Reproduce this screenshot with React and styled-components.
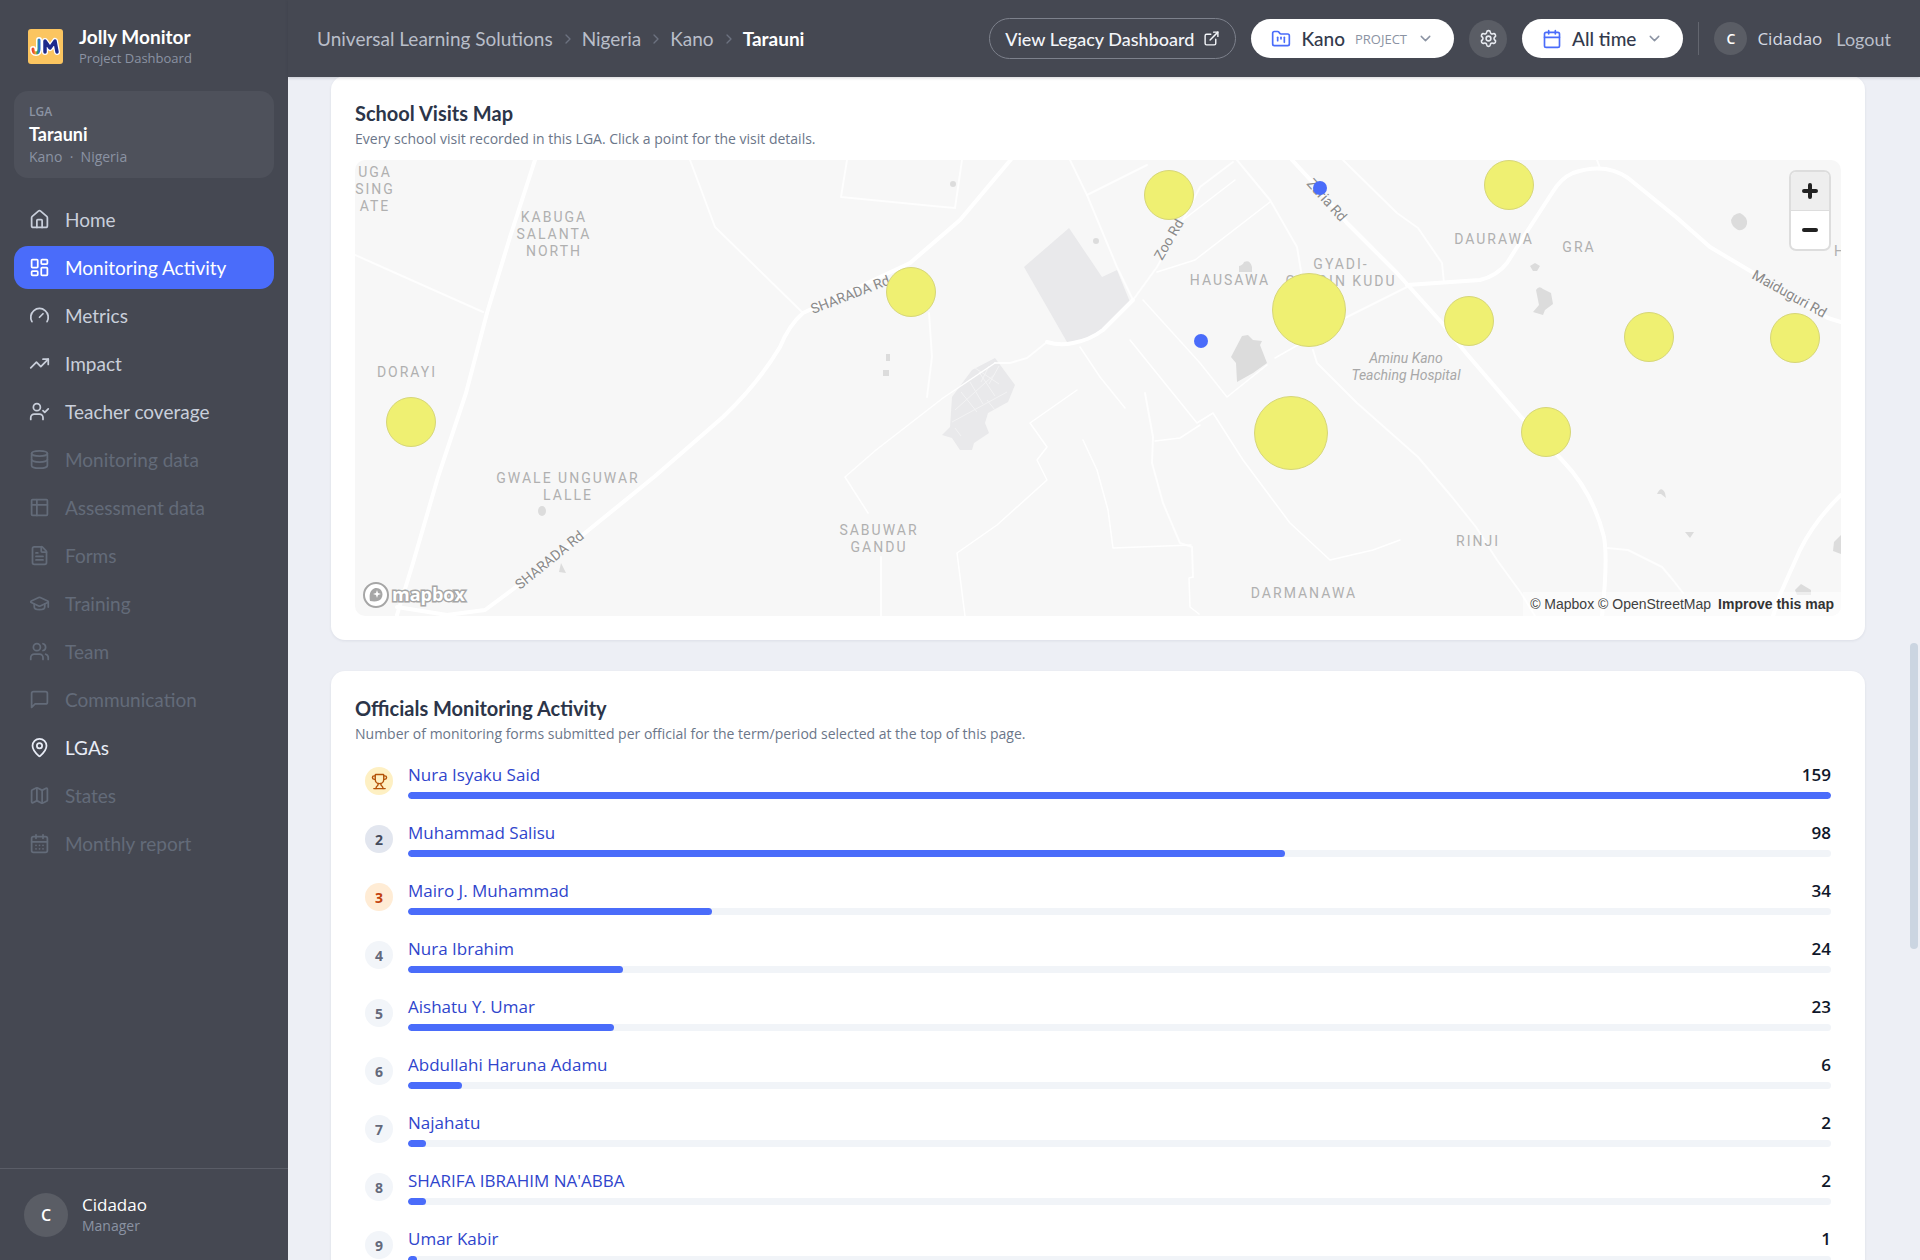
import styled, { createGlobalStyle, css } from "styled-components";
import {
    Calendar, CalendarDays, ChevronDown, ChevronRight, Database, ExternalLink, FileText, FolderKanban, Gauge,
    GraduationCap, House, LayoutDashboard, Map, MapPin, Settings, TrendingUp, Trophy, UserCheck, Users,
} from "lucide-react";

const HEADING_FONT = "Lato, 'Open Sans', sans-serif"
const BODY_FONT = "'Open Sans', 'Noto Sans', sans-serif"

const SheetIcon = () => (
    <svg viewBox="0 0 24 24" fill="none" stroke="currentColor" strokeWidth="2" strokeLinecap="round" strokeLinejoin="round">
        <rect x="3" y="3" width="18" height="18" rx="1" />
        <path d="M3 9h18M9 3v18" />
    </svg>
)

const MessageIcon = () => (
    <svg viewBox="0 0 24 24" fill="none" stroke="currentColor" strokeWidth="2" strokeLinecap="round" strokeLinejoin="round">
        <path d="M21 15a2 2 0 0 1-2 2H7l-4 4V5a2 2 0 0 1 2-2h14a2 2 0 0 1 2 2z" />
    </svg>
)

const NAV_ITEMS = [
    { label: 'Home', icon: House },
    { label: 'Monitoring Activity', icon: LayoutDashboard, state: 'active' },
    { label: 'Metrics', icon: Gauge },
    { label: 'Impact', icon: TrendingUp },
    { label: 'Teacher coverage', icon: UserCheck },
    { label: 'Monitoring data', icon: Database, state: 'disabled' },
    { label: 'Assessment data', icon: SheetIcon, state: 'disabled' },
    { label: 'Forms', icon: FileText, state: 'disabled' },
    { label: 'Training', icon: GraduationCap, state: 'disabled' },
    { label: 'Team', icon: Users, state: 'disabled' },
    { label: 'Communication', icon: MessageIcon, state: 'disabled' },
    { label: 'LGAs', icon: MapPin, state: 'bright' },
    { label: 'States', icon: Map, state: 'disabled' },
    { label: 'Monthly report', icon: CalendarDays, state: 'disabled' },
]

const CRUMBS = ['Universal Learning Solutions', 'Nigeria', 'Kano']

const OFFICIALS = [
    { name: 'Nura Isyaku Said', forms: 159 },
    { name: 'Muhammad Salisu', forms: 98 },
    { name: 'Mairo J. Muhammad', forms: 34 },
    { name: 'Nura Ibrahim', forms: 24 },
    { name: 'Aishatu Y. Umar', forms: 23 },
    { name: 'Abdullahi Haruna Adamu', forms: 6 },
    { name: 'Najahatu', forms: 2 },
    { name: "SHARIFA IBRAHIM NA'ABBA", forms: 2 },
    { name: 'Umar Kabir', forms: 1 },
]

const MAIN_ROADS = [
    'M180 0 L155 77 L132 153 L111 233 L83 317 L58 403 L42 455',
    'M42 447 L92 455 L130 450 L157 430 L230 373 L299 317 L368 257 Q402 225 425 187 Q434 165 448 153 L555 103 L605 60 L658 -3',
    'M692 182 Q705 186 718 183 Q735 180 748 170 L778 140',
    'M937 0 L962 27 L992 63 L1042 113 L1087 163 L1111 193 L1166 257 L1207 300 Q1238 332 1249 377 Q1253 400 1247 456',
    'M1052 125 L1125 120 Q1142 116 1152 103 L1173 70 L1197 33 Q1206 18 1218 13 Q1250 2 1273 18 L1321 57 L1355 87 L1397 112 L1473 158 L1486 162',
    'M1486 335 Q1460 360 1445 390 L1424 437 L1418 456',
]

const MINOR_ROADS = [
    'M335 0 L360 67 L448 153',
    'M492 0 L486 37 L578 46 L600 48 L607 0',
    'M0 95 L27 107 L128 152',
    'M526 397 L526 456',
    'M574 153 L577 197 L572 237',
    'M692 182 L672 198 L655 203 L640 203',
    'M778 140 L802 107 L828 60 L845 27 L878 2',
    'M715 0 L732 35 L762 107 L778 140',
    'M732 35 L792 5',
    'M882 0 L915 40 L942 87 L947 117',
    'M988 0 L1042 53 L1063 68 L1087 103 L1089 123',
    'M1056 125 L992 157',
    'M958 190 L962 203 L1002 243 L1063 297 L1097 337 L1121 367 L1142 400 L1166 433 L1180 456',
    'M1242 0 L1245 8',
    'M1252 388 L1273 390 L1307 407 L1318 420 L1328 433',
    'M790 233 L798 277 L797 303 L808 343 L825 383 L837 387 L838 417',
]

const STREETS = [
    'M640 203 L588 238 L521 290 L490 317 L513 353',
    'M828 60 L880 20',
    'M802 112 L840 100 L915 42',
    'M992 157 L920 198',
    'M838 417 L834 418 L835 447 L844 454',
    'M725 187 L745 217 L770 248',
    'M728 280 L742 310 L753 350 L758 388 L836 385',
    'M610 456 L602 393 L642 365 L692 320 L682 300 L692 287 L675 263 L722 230',
    'M788 140 L845 203 L872 237 L912 205',
    'M775 180 L842 263 L858 253 L888 300 L935 363 L975 400 L1018 390 L1045 380',
    'M800 281 L825 278 L845 265',
]

const PLACES = [
    { x: 20, y: 17, lines: ['UGA', 'SING', 'ATE'] },
    { x: 199, y: 62, lines: ['KABUGA', 'SALANTA', 'NORTH'] },
    { x: 52, y: 217, lines: ['DORAYI'] },
    { x: 213, y: 323, lines: ['GWALE UNGUWAR', 'LALLE'] },
    { x: 524, y: 375, lines: ['SABUWAR', 'GANDU'] },
    { x: 875, y: 125, lines: ['HAUSAWA'] },
    { x: 986, y: 109, lines: ['GYADI-', 'GYADIN KUDU'] },
    { x: 949, y: 438, lines: ['DARMANAWA'] },
    { x: 1139, y: 84, lines: ['DAURAWA'] },
    { x: 1224, y: 92, lines: ['GRA'] },
    { x: 1123, y: 386, lines: ['RINJI'] },
    { x: 1485, y: 96, lines: ['H'] },
]

const ROAD_NAMES = [
    { x: 458, y: 154, angle: -21, name: 'SHARADA Rd' },
    { x: 165, y: 430, angle: -39, name: 'SHARADA Rd' },
    { x: 807, y: 101, angle: -60, name: 'Zoo Rd' },
    { x: 951, y: 24, angle: 48, name: 'Zaria Rd' },
    { x: 1396, y: 118, angle: 29, name: 'Maiduguri Rd' },
]

const CLUSTERS = [
    [56, 262, 24.5], [556, 132, 24.5], [814, 35, 24.5], [954, 150, 36.5], [936, 273, 36.5],
    [1154, 25, 24.5], [1114, 161, 24.5], [1294, 177, 24.5], [1440, 178, 24.5], [1191, 272, 24.5],
]

const VISITS = [[965, 28], [846, 181]]

const VisitsMap = () => (
    <MapDrawing viewBox="0 0 1486 456" preserveAspectRatio="xMidYMid slice" role="img" aria-label="School visits map">
        <rect width="1486" height="456" fill="#f7f7f7" />
        <g fill="#e9e9eb">
            <path d="M669 107 L714 68 L747 117 L762 110 L775 142 L748 168 Q733 180 717 182 L712 182 Z" />
            <path d="M640 198 L660 225 L653 242 L633 253 L630 263 L634 273 L619 283 L617 290 L605 290 L597 278 L587 275 L595 267 L597 237 L617 210 Z" />
        </g>
        <path
            d="M600 250 L640 214 M597 262 L652 232 M606 232 L622 252 M615 222 L628 244 M624 212 L640 236 M620 208 L644 224 M634 206 L626 222 M644 206 L634 224 M632 240 L640 250 M600 268 L606 276"
            stroke="#f3f3f4" strokeWidth="1" fill="none"
        />
        <g fill="#dcdcdc">
            <path d="M887 176 L893 175 L898 180 L907 181 L905 185 L912 203 L898 213 L882 222 L881 203 L876 197 Z" />
            <path d="M884 112 L884 106 Q888 105 889 102 Q895 99 897 107 L897 112 Z" />
            <path d="M1376 60 Q1378 54 1385 53 Q1393 57 1392 64 Q1390 71 1383 70 Q1376 66 1376 60 Z" />
            <path d="M1175 106 L1180 103 L1185 106 L1182 111 L1178 111 Z" />
            <path d="M1181 130 Q1184 125 1188 129 L1196 133 L1198 144 L1190 150 L1188 155 L1178 152 L1184 145 Z" />
            <path d="M1302 334 Q1306 325 1310 333 L1311 338 L1306 334 Z" />
            <path d="M1330 372 L1339 372 L1335 378 Z" />
            <path d="M1486 375 L1479 382 L1478 391 L1486 394 Z" />
            <path d="M1440 430 L1446 424 L1456 430 L1456 435 L1442 435 Z" />
            <circle cx="598" cy="24" r="3" />
            <circle cx="741" cy="81" r="3" />
            <rect x="531" y="194" width="4" height="7" />
            <rect x="528" y="210" width="6" height="6" />
            <ellipse cx="187" cy="351" rx="4" ry="5" />
            <path d="M206 403 L211 413 L204 412 Z" />
        </g>
        <g fill="none" stroke="#fff" strokeLinecap="round" strokeLinejoin="round">
            {STREETS.map((d) => <path key={d} d={d} strokeWidth="1.5" />)}
            {MINOR_ROADS.map((d) => <path key={d} d={d} strokeWidth="2" strokeOpacity="0.8" />)}
            {MAIN_ROADS.map((d) => <path key={d} d={d} strokeWidth="4" />)}
        </g>
        {PLACES.map(({ x, y, lines }) => lines.map((line, i) => (
            <PlaceName key={`${line}-${x}`} x={x} y={y + i * 17}>{line}</PlaceName>
        )))}
        <PoiName x="1051" y="203">Aminu Kano</PoiName>
        <PoiName x="1051" y="220">Teaching Hospital</PoiName>
        {ROAD_NAMES.map(({ x, y, angle, name }) => (
            <RoadName key={x} transform={`translate(${x} ${y}) rotate(${angle})`}>{name}</RoadName>
        ))}
        <g fill="#eff072" stroke="#d6d678">
            {CLUSTERS.map(([x, y, r]) => <circle key={x} cx={x} cy={y} r={r} />)}
        </g>
        <g fill="#4a6cfa">
            {VISITS.map(([x, y]) => <circle key={x} cx={x} cy={y} r="7" />)}
        </g>
    </MapDrawing>
)

const MapboxLogo = () => (
    <svg width="114" height="28" viewBox="0 0 114 28" aria-label="Mapbox">
        <circle cx="14" cy="14" r="12" fill="#fff" stroke="#a6a6a6" strokeWidth="2" />
        <path d="M8 20c-1-6 0-9 2-11 3-3 7-2 9 0 2 3 2 6 0 9-2 2-5 3-11 2z" fill="#a6a6a6" />
        <path d="M15 9l1 3 3 1-3 1-1 3-1-3-3-1 3-1z" fill="#fff" />
        <LogoWord x="30" y="20">mapbox</LogoWord>
    </svg>
)

const Sidebar = () => (
    <SidebarWrapper>
        <Brand>
            <svg width="35" height="35" viewBox="0 0 35 35" aria-hidden="true">
                <defs>
                    <linearGradient id="rainbow" x1="0" x2="1" y1="0" y2="0">
                        <stop offset="0" stopColor="#e8452c" />
                        <stop offset="0.4" stopColor="#f0a030" />
                        <stop offset="0.7" stopColor="#35a852" />
                        <stop offset="1" stopColor="#2c6fd6" />
                    </linearGradient>
                </defs>
                <rect width="35" height="35" rx="3" fill="#fbc560" />
                <g fill="none" strokeLinecap="round" strokeLinejoin="round">
                    <path d="M11 11v9q0 4-3 4t-3-4M17 23V12l5 7 5-7 2 11" stroke="#fff" strokeWidth="6" />
                    <path d="M11 11v9q0 4-3 4t-3-4" stroke="url(#rainbow)" strokeWidth="3" />
                    <path d="M17 23V12l5 7 5-7 2 11" stroke="#1d2a8c" strokeWidth="3.5" />
                </g>
            </svg>
            <div>
                <BrandName>Jolly Monitor</BrandName>
                <Muted $small>Project Dashboard</Muted>
            </div>
        </Brand>
        <Scope>
            <ScopeKind>LGA</ScopeKind>
            <ScopeName>Tarauni</ScopeName>
            <Muted>Kano &nbsp;·&nbsp; Nigeria</Muted>
        </Scope>
        <Nav>
            {NAV_ITEMS.map(({ label, icon: Icon, state }) => (
                <NavLink key={label} href="#" $state={state} aria-disabled={state === 'disabled'}>
                    <Icon />
                    {label}
                </NavLink>
            ))}
        </Nav>
        <Profile>
            <Avatar $size={44}>C</Avatar>
            <div>
                <ProfileName>Cidadao</ProfileName>
                <Muted>Manager</Muted>
            </div>
        </Profile>
    </SidebarWrapper>
)

const TopBar = () => (
    <TopBarWrapper>
        <Breadcrumb aria-label="Breadcrumb">
            {CRUMBS.map((crumb) => (
                <Crumb key={crumb}>
                    <a href="#">{crumb}</a>
                    <ChevronRight size={16} />
                </Crumb>
            ))}
            <strong>Tarauni</strong>
        </Breadcrumb>
        <Actions>
            <LegacyLink href="#">
                View Legacy Dashboard
                <ExternalLink size={17} />
            </LegacyLink>
            <Picker>
                <FolderKanban size={20} />
                Kano
                <small>PROJECT</small>
                <ChevronDown size={17} />
            </Picker>
            <SettingsButton aria-label="Settings">
                <Settings size={19} />
            </SettingsButton>
            <Picker>
                <Calendar size={20} />
                All time
                <ChevronDown size={17} />
            </Picker>
            <Account>
                <Avatar $size={33}>C</Avatar>
                <span>Cidadao</span>
                <LogoutButton>Logout</LogoutButton>
            </Account>
        </Actions>
    </TopBarWrapper>
)

const App = () => {
    const max = Math.max(...OFFICIALS.map((official) => official.forms))

    return (
        <Page>
            <GlobalStyle />
            <Sidebar />
            <Main>
                <TopBar />
                <Content>
                    <Card>
                        <CardTitle>School Visits Map</CardTitle>
                        <CardText>Every school visit recorded in this LGA. Click a point for the visit details.</CardText>
                        <MapFrame>
                            <VisitsMap />
                            <ZoomControl>
                                <button aria-label="Zoom in">
                                    <svg width="16" height="16" viewBox="0 0 16 16"><path d="M8 2v12M2 8h12" /></svg>
                                </button>
                                <button aria-label="Zoom out">
                                    <svg width="16" height="16" viewBox="0 0 16 16"><path d="M2 8h12" /></svg>
                                </button>
                            </ZoomControl>
                            <LogoLink href="#"><MapboxLogo /></LogoLink>
                            <Attribution>
                                <a href="#">© Mapbox</a> <a href="#">© OpenStreetMap</a>
                                <ImproveLink href="#">Improve this map</ImproveLink>
                            </Attribution>
                        </MapFrame>
                    </Card>
                    <Card>
                        <CardTitle>Officials Monitoring Activity</CardTitle>
                        <CardText>Number of monitoring forms submitted per official for the term/period selected at the top of this page.</CardText>
                        <Ranking>
                            {OFFICIALS.map(({ name, forms }, i) => (
                                <RankRow key={name}>
                                    <Rank $place={i + 1}>{i === 0 ? <Trophy size={17} /> : i + 1}</Rank>
                                    <RankBody>
                                        <RankLine>
                                            <a href="#">{name}</a>
                                            <span>{forms}</span>
                                        </RankLine>
                                        <Track>
                                            <Bar style={{ width: `${(forms / max) * 100}%` }} />
                                        </Track>
                                    </RankBody>
                                </RankRow>
                            ))}
                        </Ranking>
                    </Card>
                </Content>
                <ScrollThumb />
            </Main>
        </Page>
    )
}

export default App

const GlobalStyle = createGlobalStyle`
  * {
    box-sizing: border-box;
  }
  body {
    margin: 0;
    font-family: ${BODY_FONT};
    background: #edeff5;
  }
  a {
    color: inherit;
    text-decoration: none;
  }
  button {
    padding: 0;
    border: 0;
    font: inherit;
    color: inherit;
    background: none;
    cursor: pointer;
  }
  svg {
    display: block;
    flex-shrink: 0;
  }
`
const Page = styled.div`
  display: flex;
  height: 100vh;
  overflow: hidden;
`
const SidebarWrapper = styled.aside`
  display: flex;
  flex-direction: column;
  flex: 0 0 288px;
  color: #fff;
  background: #454852;
`
const Brand = styled.div`
  display: flex;
  align-items: center;
  gap: 16px;
  padding: 24px 28px 0;
  height: 68px;
`
const BrandName = styled.div`
  font: 700 19px/23px ${HEADING_FONT};
`
const Muted = styled.div`
  font-size: ${({ $small }) => ($small ? 13 : 14)}px;
  line-height: 20px;
  color: #8b93a3;
`
const Scope = styled.div`
  margin: 23px 14px 0;
  padding: 12px 15px 11px;
  border-radius: 14px;
  background: #4e515b;
`
const ScopeKind = styled.div`
  font-size: 12px;
  font-weight: 600;
  line-height: 18px;
  color: #8b93a3;
`
const ScopeName = styled.div`
  font: 700 18px/26px ${HEADING_FONT};
`
const Nav = styled.nav`
  display: flex;
  flex-direction: column;
  gap: 5px;
  flex: 1;
  padding: 20px 14px;
`
const NAV_COLORS = { active: '#fff', bright: '#e8ecf6', disabled: '#636b79' }
const NavLink = styled.a`
  display: flex;
  align-items: center;
  gap: 15px;
  height: 43px;
  padding: 0 15px;
  border-radius: 14px;
  font: 400 19px/24px ${HEADING_FONT};
  color: ${({ $state }) => NAV_COLORS[$state] || '#c9cfdb'};
  background: ${({ $state }) => ($state === 'active' ? '#4a6cfa' : 'none')};

  svg {
    width: 21px;
    height: 21px;
  }
`
const Profile = styled.div`
  display: flex;
  align-items: center;
  gap: 14px;
  height: 92px;
  padding: 0 24px;
  border-top: 1px solid #5a5d67;
`
const ProfileName = styled.div`
  font-size: 17px;
  font-weight: 500;
  line-height: 22px;
`
const Avatar = styled.div`
  display: grid;
  place-items: center;
  width: ${({ $size }) => $size}px;
  height: ${({ $size }) => $size}px;
  border-radius: 50%;
  font-size: ${({ $size }) => ($size > 40 ? 16 : 14)}px;
  font-weight: 600;
  color: #fff;
  background: #5a5d65;
`
const Main = styled.main`
  position: relative;
  display: flex;
  flex-direction: column;
  flex: 1;
  min-width: 0;
`
const TopBarWrapper = styled.header`
  z-index: 1;
  display: flex;
  align-items: center;
  justify-content: space-between;
  flex: 0 0 77px;
  padding: 0 29px;
  color: #d5d9e2;
  background: #454852;
  box-shadow: 0 1px 3px rgba(40, 44, 60, 0.2);
`
const Breadcrumb = styled.nav`
  display: flex;
  align-items: center;
  font: 400 19px/24px ${HEADING_FONT};

  strong {
    color: #fff;
  }
`
const Crumb = styled.span`
  display: flex;
  align-items: center;
  gap: 7px;
  margin-right: 6px;
  color: #b9bec9;

  svg {
    color: #6c7280;
  }
`
const Actions = styled.div`
  display: flex;
  align-items: center;
  gap: 15px;
`
const LegacyLink = styled.a`
  display: flex;
  align-items: center;
  gap: 9px;
  height: 41px;
  padding: 0 15px;
  border: 1px solid #7d818c;
  border-radius: 21px;
  font: 500 18px/24px ${HEADING_FONT};
  color: #f3f5f9;
`
const Picker = styled.button`
  display: flex;
  align-items: center;
  gap: 10px;
  height: 39px;
  padding: 0 20px;
  border-radius: 20px;
  font: 500 19px/24px ${HEADING_FONT};
  color: #333a4c;
  background: #fff;

  small {
    font: 400 13px/16px ${BODY_FONT};
    color: #8b93a3;
  }
  svg {
    color: #4a6cfa;
  }
  svg:last-child {
    color: #8b93a3;
  }
`
const SettingsButton = styled.button`
  display: grid;
  place-items: center;
  width: 38px;
  height: 38px;
  border-radius: 50%;
  color: #e8ebf1;
  background: #5a5d65;
`
const Account = styled.div`
  display: flex;
  align-items: center;
  gap: 10px;
  height: 33px;
  padding-left: 15px;
  border-left: 1px solid #63666f;
  font-size: 17px;
`
const LogoutButton = styled.button`
  margin-left: 4px;
  font: 400 18px/24px ${HEADING_FONT};
  color: #b9bec9;
`
const Content = styled.div`
  display: flex;
  flex-direction: column;
  gap: 31px;
  margin-top: -1px;
  padding: 0 55px 0 43px;
`
const Card = styled.section`
  padding: 24px;
  border-radius: 14px;
  background: #fff;
  box-shadow: 0 1px 3px rgba(30, 41, 59, 0.08);
`
const CardTitle = styled.h2`
  margin: 0;
  font: 700 20px/27px ${HEADING_FONT};
  color: #2c3549;
`
const CardText = styled.p`
  margin: 0;
  font-size: 14px;
  line-height: 23px;
  color: #6b7689;
`
const MapFrame = styled.div`
  position: relative;
  height: 456px;
  margin-top: 10px;
  border-radius: 10px;
  overflow: hidden;
`
const MapDrawing = styled.svg`
  width: 100%;
  height: 100%;
`
const PlaceName = styled.text`
  font: 400 14px Roboto, sans-serif;
  letter-spacing: 2px;
  text-anchor: middle;
  fill: #b0b0b0;
`
const PoiName = styled.text`
  font: italic 400 14px Roboto, sans-serif;
  text-anchor: middle;
  fill: #a8a8a8;
`
const RoadName = styled.text`
  font: 400 14px Roboto, sans-serif;
  fill: #8a8a8a;
`
const LogoWord = styled.text`
  font: 700 18px 'Open Sans', sans-serif;
  fill: #fff;
  stroke: #a6a6a6;
  stroke-width: 3px;
  paint-order: stroke;
`
const ZoomControl = styled.div`
  position: absolute;
  top: 12px;
  right: 12px;
  display: flex;
  flex-direction: column;
  width: 38px;
  border-radius: 5px;
  background: #fff;
  box-shadow: 0 0 0 2px rgba(0, 0, 0, 0.1);
  overflow: hidden;

  button {
    display: grid;
    place-items: center;
    height: 38px;
  }
  button:first-child {
    height: 39px;
    background: #eeeeee;
    border-bottom: 1px solid #dddddd;
  }
  path {
    fill: none;
    stroke: #222;
    stroke-width: 4px;
    stroke-linecap: round;
  }
`
const LogoLink = styled.a`
  position: absolute;
  left: 7px;
  bottom: 7px;
`
const Attribution = styled.div`
  position: absolute;
  right: 0;
  bottom: 0;
  padding: 0 7px;
  font: 14px/24px 'Liberation Sans', Arial, sans-serif;
  color: #404040;
  background: rgba(255, 255, 255, 0.5);
`
const ImproveLink = styled.a`
  margin-left: 7px;
  font-weight: 700;
  color: #333;
`
const Ranking = styled.ol`
  display: flex;
  flex-direction: column;
  gap: 22px;
  margin: 18px 0 0;
  padding: 0 10px;
  list-style: none;
`
const RankRow = styled.li`
  display: flex;
  align-items: center;
  gap: 15px;
  height: 36px;
`
const RANK_COLORS = {
    1: css`
      color: #b45309;
      background: #fef0c3;
    `,
    2: css`
      color: #454b5c;
      background: #e2e6ef;
    `,
    3: css`
      color: #c2410c;
      background: #ffecd5;
    `,
}
const Rank = styled.div`
  display: grid;
  place-items: center;
  width: 28px;
  height: 28px;
  border-radius: 50%;
  font-size: 14px;
  font-weight: 700;
  color: #64697b;
  background: #f2f5f9;
  ${({ $place }) => RANK_COLORS[$place]}
`
const RankBody = styled.div`
  flex: 1;
`
const RankLine = styled.div`
  display: flex;
  justify-content: space-between;
  font-size: 17px;
  line-height: 24px;
  color: #0f172a;

  a {
    color: #2f45cc;
  }
  span {
    font-weight: 600;
  }
`
const Track = styled.div`
  height: 7px;
  margin-top: 5px;
  border-radius: 4px;
  background: #f1f4f8;
  overflow: hidden;
`
const Bar = styled.div`
  height: 100%;
  border-radius: 4px;
  background: #4a6cfa;
`
/* drawn over the page edge, so it takes no width from the content */
const ScrollThumb = styled.div`
  position: absolute;
  top: 51%;
  right: 2px;
  width: 8px;
  height: 306px;
  border-radius: 4px;
  background: #cbd5e1;
`
